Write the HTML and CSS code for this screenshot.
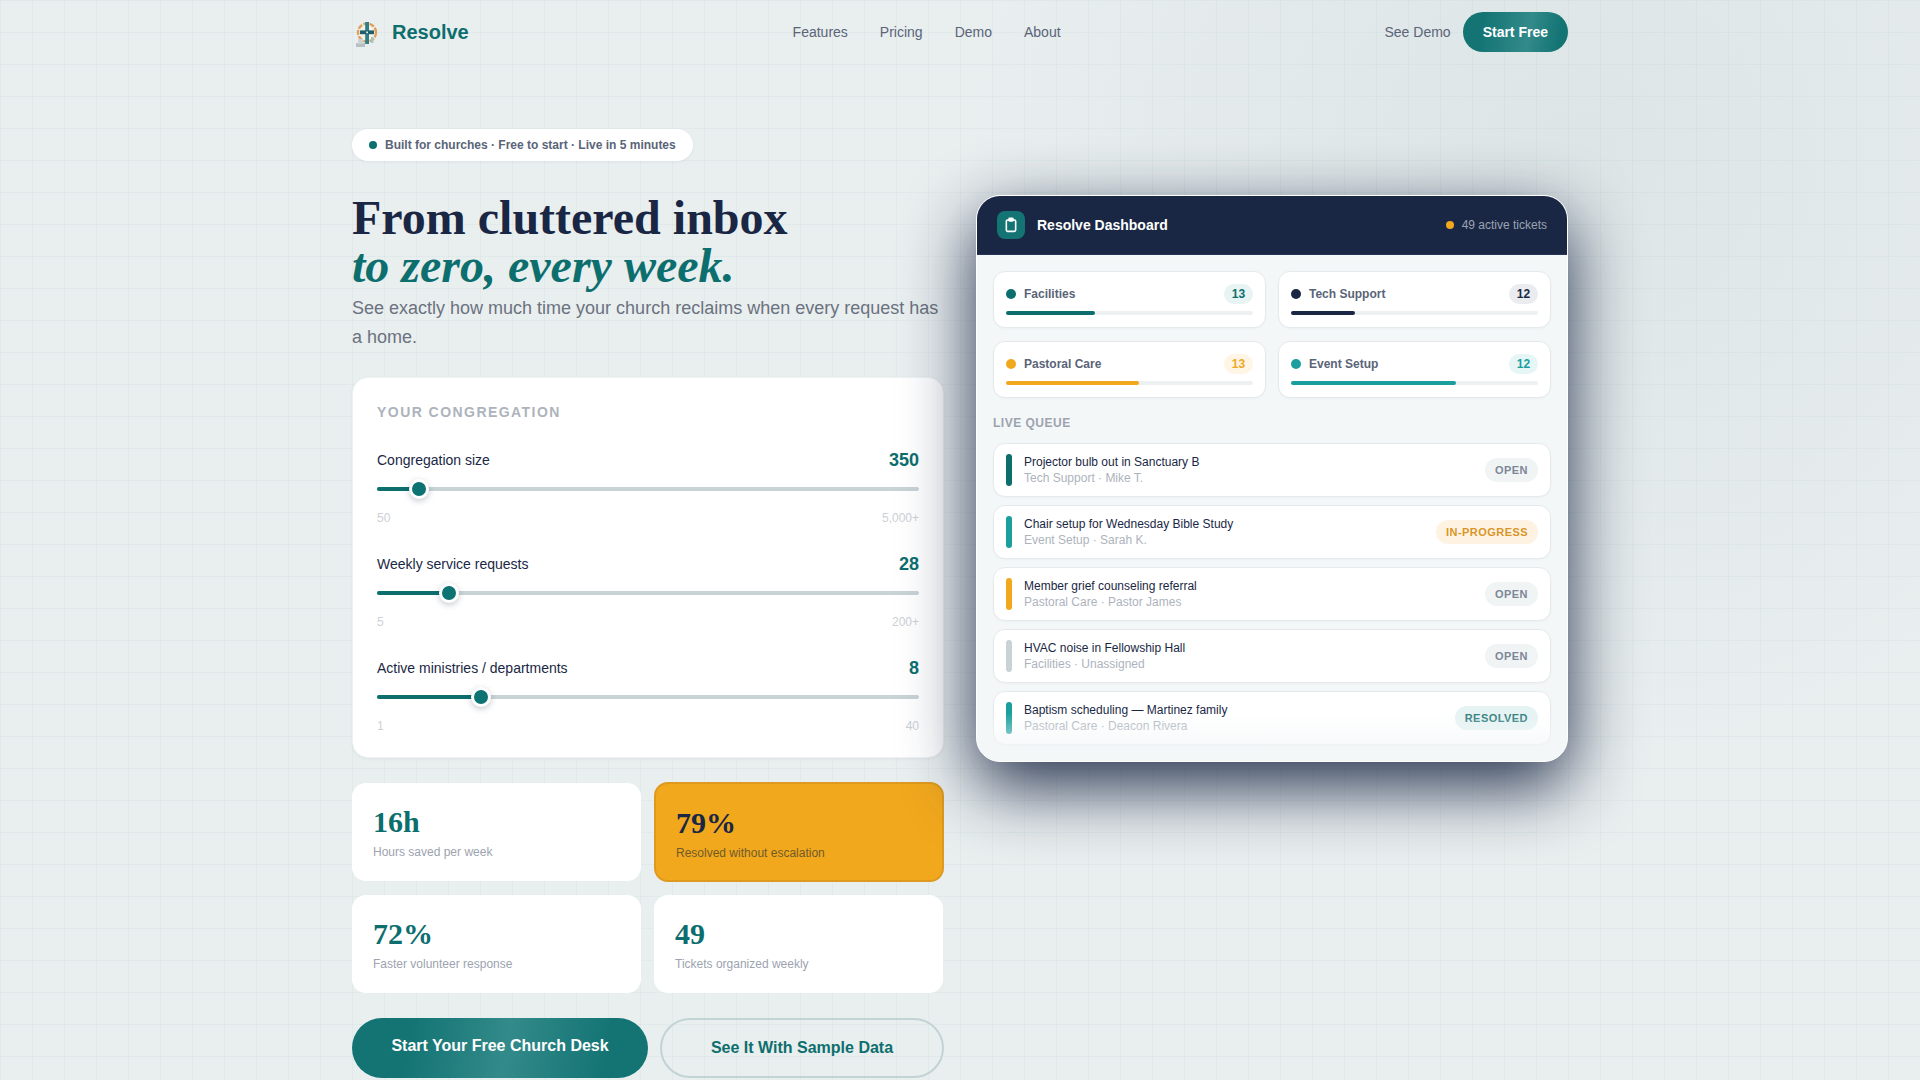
FILE: index.html
```html
<!DOCTYPE html>
<html lang="en">
<head>
  <meta charset="UTF-8" />
  <title>Resolve</title>
  <link rel="stylesheet" href="styles.css">
</head>
<body>

<div class="page">
  <nav class="nav">
    <a class="logo" href="#">
      <svg class="logo-mark" width="32" height="32" viewBox="0 0 32 32">
        <circle cx="15" cy="16.500" r="9" fill="#f6f0e6" stroke="#dda05c" stroke-width="2.400" stroke-dasharray="5 1.400"/>
        <path d="M4 27h9v4H4z" fill="#b9c0c3"/>
        <path d="M6 23h5v5H6z" fill="#cdd2d4"/>
        <path d="M13.200 6h3.800v22h-3.800z" fill="#2c7f86"/>
        <path d="M8 14.400h14v3.800H8z" fill="#1f5f6c"/>
        <path d="M14.200 15.400h1.800v1.800h-1.800z" fill="#e8eef0"/>
        <path d="M19 21h2.500v6H19z" fill="#a9c4c6"/>
      </svg>
      <span>Resolve</span>
    </a>
    <div class="nav-links">
      <a href="#">Features</a>
      <a href="#">Pricing</a>
      <a href="#">Demo</a>
      <a href="#">About</a>
    </div>
    <div class="nav-actions">
      <a class="see-demo" href="#">See Demo</a>
      <a class="start-free" href="#">Start Free</a>
    </div>
  </nav>

  <main class="hero">
    <section class="left-col">
      <div class="badge"><span class="badge-dot"></span>Built for churches · Free to start · Live in 5 minutes</div>

      <h1>From cluttered inbox<em>to zero, every week.</em></h1>
      <p class="sub">See exactly how much time your church reclaims when every request has a home.</p>

      <div class="calc-card">
        <div class="calc-title">YOUR CONGREGATION</div>

        <div class="slider">
          <div class="slider-head"><span>Congregation size</span><strong>350</strong></div>
          <div class="track"><div class="fill" style="width: 7.7%"><span class="thumb"></span></div></div>
          <div class="slider-range"><span>50</span><span>5,000+</span></div>
        </div>

        <div class="slider">
          <div class="slider-head"><span>Weekly service requests</span><strong>28</strong></div>
          <div class="track"><div class="fill" style="width: 13.2%"><span class="thumb"></span></div></div>
          <div class="slider-range"><span>5</span><span>200+</span></div>
        </div>

        <div class="slider">
          <div class="slider-head"><span>Active ministries / departments</span><strong>8</strong></div>
          <div class="track"><div class="fill" style="width: 19.1%"><span class="thumb"></span></div></div>
          <div class="slider-range"><span>1</span><span>40</span></div>
        </div>
      </div>

      <div class="stats">
        <div class="stat">
          <div class="stat-value">16h</div>
          <div class="stat-label">Hours saved per week</div>
        </div>
        <div class="stat stat-gold">
          <div class="stat-value">79%</div>
          <div class="stat-label">Resolved without escalation</div>
        </div>
        <div class="stat">
          <div class="stat-value">72%</div>
          <div class="stat-label">Faster volunteer response</div>
        </div>
        <div class="stat">
          <div class="stat-value">49</div>
          <div class="stat-label">Tickets organized weekly</div>
        </div>
      </div>

      <div class="cta-row">
        <a class="cta cta-primary" href="#">Start Your Free Church Desk</a>
        <a class="cta cta-outline" href="#">See It With Sample Data</a>
      </div>
    </section>

    <section class="right-col">
      <div class="panel">
        <header class="panel-head">
          <div class="panel-icon">
            <svg width="16" height="16" viewBox="0 0 24 24" fill="none" stroke="#fff" stroke-width="2.4" stroke-linecap="round" stroke-linejoin="round">
              <rect x="5" y="4.5" width="14" height="17" rx="2"/>
              <rect x="9" y="2" width="6" height="4" rx="1" fill="#fff"/>
            </svg>
          </div>
          <span class="panel-title">Resolve Dashboard</span>
          <span class="panel-status"><i></i>49 active tickets</span>
        </header>

        <div class="panel-body">
          <div class="cats">
            <div class="cat">
              <div class="cat-head"><i class="dot teal"></i><span>Facilities</span><b class="count count-teal">13</b></div>
              <div class="bar"><div class="teal" style="width: 36%"></div></div>
            </div>
            <div class="cat">
              <div class="cat-head"><i class="dot navy"></i><span>Tech Support</span><b class="count count-navy">12</b></div>
              <div class="bar"><div class="navy" style="width: 26%"></div></div>
            </div>
            <div class="cat">
              <div class="cat-head"><i class="dot gold"></i><span>Pastoral Care</span><b class="count count-gold">13</b></div>
              <div class="bar"><div class="gold" style="width: 54%"></div></div>
            </div>
            <div class="cat">
              <div class="cat-head"><i class="dot aqua"></i><span>Event Setup</span><b class="count count-aqua">12</b></div>
              <div class="bar"><div class="aqua" style="width: 67%"></div></div>
            </div>
          </div>

          <div class="queue-title">LIVE QUEUE</div>

          <div class="queue">
            <div class="ticket">
              <i class="accent teal"></i>
              <div class="ticket-text"><div>Projector bulb out in Sanctuary B</div><small>Tech Support · Mike T.</small></div>
              <span class="pill">OPEN</span>
            </div>
            <div class="ticket">
              <i class="accent aqua"></i>
              <div class="ticket-text"><div>Chair setup for Wednesday Bible Study</div><small>Event Setup · Sarah K.</small></div>
              <span class="pill pill-progress">IN-PROGRESS</span>
            </div>
            <div class="ticket">
              <i class="accent gold"></i>
              <div class="ticket-text"><div>Member grief counseling referral</div><small>Pastoral Care · Pastor James</small></div>
              <span class="pill">OPEN</span>
            </div>
            <div class="ticket">
              <i class="accent grey"></i>
              <div class="ticket-text"><div>HVAC noise in Fellowship Hall</div><small>Facilities · Unassigned</small></div>
              <span class="pill">OPEN</span>
            </div>
            <div class="ticket">
              <i class="accent aqua"></i>
              <div class="ticket-text"><div>Baptism scheduling — Martinez family</div><small>Pastoral Care · Deacon Rivera</small></div>
              <span class="pill pill-resolved">RESOLVED</span>
            </div>
          </div>
          <div class="queue-fade"></div>
        </div>
      </div>
    </section>
  </main>
</div>

</body>
</html>
```

FILE: styles.css
```css
* {
  box-sizing: border-box;
}

html, body {
  height: 1080px;
  overflow: hidden;
}

body {
  margin: 0;
  font-family: "Liberation Sans", Arial, sans-serif;
  color: #1a2744;
  background-color: #e9eeef;
  background-image:
    linear-gradient(rgba(26, 122, 122, 0.04) 1px, transparent 1px),
    linear-gradient(90deg, rgba(26, 122, 122, 0.04) 1px, transparent 1px),
    radial-gradient(circle at 82% 14%, rgba(26, 80, 90, 0.06), transparent 34%);
  background-size: 32px 32px, 32px 32px, 100% 100%;
}

a {
  text-decoration: none;
}

.page {
  width: 1280px;
  margin: 0 auto;
  padding: 0 32px;
}

/* nav */
.nav {
  height: 64px;
  display: flex;
  align-items: center;
  justify-content: space-between;
}

.logo {
  display: flex;
  align-items: center;
  gap: 8px;
  color: #0d6e6e;
  font-size: 20px;
  font-weight: bold;
}

.nav-links {
  display: flex;
  gap: 32px;
  font-size: 14px;
}

.nav-links a,
.see-demo {
  color: #5a6478;
  font-size: 14px;
}

.nav-actions {
  display: flex;
  align-items: center;
  gap: 12px;
}

.start-free {
  height: 40px;
  padding: 0 20px;
  display: flex;
  align-items: center;
  border-radius: 20px;
  color: #fff;
  font-size: 14px;
  font-weight: bold;
  background: linear-gradient(100deg, #147474 20%, #338a8a 62%, #147474 90%);
}

/* hero */
.hero {
  display: grid;
  grid-template-columns: 592px 592px;
  gap: 32px;
  padding-top: 65px;
}

.badge {
  display: inline-flex;
  align-items: center;
  gap: 8px;
  height: 32px;
  padding: 0 17px;
  background: #fff;
  border-radius: 16px;
  box-shadow: 0 1px 3px rgba(26, 39, 68, 0.06);
  color: #5a6478;
  font-size: 12px;
  font-weight: bold;
}

.badge-dot {
  width: 8px;
  height: 8px;
  border-radius: 50%;
  background: #0d6e6e;
}

h1 {
  margin: 33px 0 0;
  font-family: "Liberation Serif", "Times New Roman", serif;
  font-size: 48px;
  line-height: 48px;
  font-weight: bold;
  color: #1a2744;
}

h1 em {
  display: block;
  color: #0d6e6e;
}

.sub {
  margin: 4px 0 25px;
  font-size: 18px;
  line-height: 29px;
  color: #6b7280;
}

/* calculator */
.calc-card {
  height: 381px;
  padding: 24px;
  background: #fff;
  border: 1px solid #eef2f3;
  border-radius: 16px;
  box-shadow: 0 1px 3px rgba(26, 39, 68, 0.06);
}

.calc-title {
  font-size: 14px;
  line-height: 20px;
  font-weight: bold;
  letter-spacing: 1.45px;
  color: #adb3bd;
  margin-bottom: 26px;
}

.slider {
  height: 104px;
}

.slider-head {
  display: flex;
  justify-content: space-between;
  align-items: center;
  height: 24px;
  font-size: 14px;
  color: #1a2744;
}

.slider-head strong {
  font-size: 18px;
  color: #0d6e6e;
}

.track {
  height: 4px;
  margin-top: 15px;
  border-radius: 2px;
  background: #c8d3d5;
}

.fill {
  position: relative;
  height: 4px;
  border-radius: 2px;
  background: #0d6e6e;
}

.thumb {
  position: absolute;
  right: -10px;
  top: -8px;
  width: 20px;
  height: 20px;
  border-radius: 50%;
  background: #0d7272;
  border: 3px solid #fff;
  box-shadow: 0 2px 6px rgba(26, 39, 68, 0.25);
}

.slider-range {
  display: flex;
  justify-content: space-between;
  margin-top: 20px;
  font-size: 12px;
  line-height: 14px;
  color: #cdd1d6;
}

/* stats */
.stats {
  display: grid;
  grid-template-columns: 289px 289px;
  gap: 14px 13px;
  margin-top: 25px;
}

.stat {
  height: 98px;
  padding: 21px 21px;
  background: #fff;
  border-radius: 14px;
}

.stat-value {
  font-family: "Liberation Serif", "Times New Roman", serif;
  font-size: 30px;
  line-height: 36px;
  font-weight: bold;
  color: #0d6e6e;
}

.stat-label {
  margin-top: 5px;
  font-size: 12px;
  line-height: 14px;
  color: #9ca3af;
}

.stat-gold {
  margin: -1px -1px -1px 0;
  height: 100px;
  padding: 21px 20px;
  background: #f2a81d;
  border: 2px solid #dd9a1f;
}

.stat-gold .stat-value {
  color: #1a2744;
}

.stat-gold .stat-label {
  color: #6f5a2b;
}

/* buttons */
.cta-row {
  display: grid;
  grid-template-columns: 296px 284px;
  gap: 12px;
  margin-top: 25px;
}

.cta {
  height: 60px;
  display: flex;
  align-items: center;
  justify-content: center;
  border-radius: 30px;
  font-size: 16px;
  font-weight: bold;
}

.cta-primary {
  padding-bottom: 4px;
  color: #fff;
  background: linear-gradient(100deg, #147474 20%, #338a8a 52%, #147474 85%);
}

.cta-outline {
  color: #0d6e6e;
  border: 2px solid #c3d3d5;
}

/* dashboard */
.panel {
  position: relative;
  height: 567px;
  margin-top: 66px;
  border: 1px solid #fff;
  border-radius: 24px;
  overflow: hidden;
  background: #f4f7f8;
  box-shadow: 0 24px 68px rgba(26, 39, 68, 0.95);
}

.panel-head {
  height: 59px;
  padding: 0 20px;
  display: flex;
  align-items: center;
  gap: 12px;
  background: #1a2744;
  border-bottom: 1px solid #26345a;
}

.panel-icon {
  width: 28px;
  height: 28px;
  display: flex;
  align-items: center;
  justify-content: center;
  border-radius: 8px;
  background: #147474;
}

.panel-title {
  flex: 1;
  color: #fff;
  font-size: 14px;
  font-weight: bold;
}

.panel-status {
  display: flex;
  align-items: center;
  gap: 8px;
  color: #9aa3b2;
  font-size: 12px;
}

.panel-status i {
  width: 8px;
  height: 8px;
  border-radius: 50%;
  background: #f2a81d;
}

.panel-body {
  padding: 16px;
}

.cats {
  display: grid;
  grid-template-columns: 1fr 1fr;
  gap: 13px 12px;
}

.cat {
  height: 57px;
  padding: 12px;
  background: #fff;
  border: 1px solid #e4eaec;
  border-radius: 12px;
  box-shadow: 0 1px 2px rgba(26, 39, 68, 0.03);
}

.cat-head {
  display: flex;
  align-items: center;
  gap: 8px;
  height: 20px;
  font-size: 12px;
  font-weight: bold;
  color: #5a6478;
}

.cat-head span {
  flex: 1;
}

.dot {
  width: 10px;
  height: 10px;
  border-radius: 50%;
}

.count {
  width: 29px;
  height: 20px;
  border-radius: 10px;
  text-align: center;
  line-height: 20px;
}

.count-teal { color: #0d6e6e; background: #e8f3f3; }
.count-navy { color: #1a2744; background: #eaecf0; }
.count-gold { color: #f2a81d; background: #fef5e6; }
.count-aqua { color: #1a9e9e; background: #e6f6f6; }

.bar {
  height: 4px;
  margin-top: 7px;
  border-radius: 2px;
  background: #eef1f2;
}

.bar div {
  height: 4px;
  border-radius: 2px;
}

.teal { background: #0d6e6e; }
.navy { background: #1a2744; }
.gold { background: #f2a81d; }
.aqua { background: #1a9e9e; }
.grey { background: #c8d3d5; }

.queue-title {
  margin-top: 17px;
  font-size: 12px;
  line-height: 16px;
  font-weight: bold;
  letter-spacing: 0.5px;
  color: #9ca3af;
}

.queue {
  display: flex;
  flex-direction: column;
  gap: 8px;
  margin-top: 12px;
}

.ticket {
  height: 54px;
  padding: 0 12px;
  display: flex;
  align-items: center;
  gap: 12px;
  background: #fff;
  border: 1px solid #e4eaec;
  border-radius: 12px;
  box-shadow: 0 1px 2px rgba(26, 39, 68, 0.03);
}

.accent {
  flex: none;
  width: 6px;
  height: 32px;
  border-radius: 3px;
}

.ticket-text {
  flex: 1;
  padding-bottom: 1px;
  font-size: 12px;
  line-height: 16px;
  color: #1a2744;
}

.ticket-text small {
  display: block;
  font-size: 12px;
  color: #adb3bd;
}

.pill {
  height: 24px;
  padding: 0 10px;
  display: flex;
  align-items: center;
  border-radius: 12px;
  font-size: 11px;
  font-weight: bold;
  letter-spacing: 0.45px;
  color: #7c8797;
  background: #f1f4f5;
}

.pill-progress { color: #d9952a; background: #fef3e2; }
.pill-resolved { color: #2f7d7d; background: #e6f3f3; }

.queue-fade {
  position: absolute;
  left: 0;
  right: 0;
  bottom: 0;
  height: 48px;
  background: linear-gradient(rgba(244, 247, 248, 0), #f4f7f8);
}
```
